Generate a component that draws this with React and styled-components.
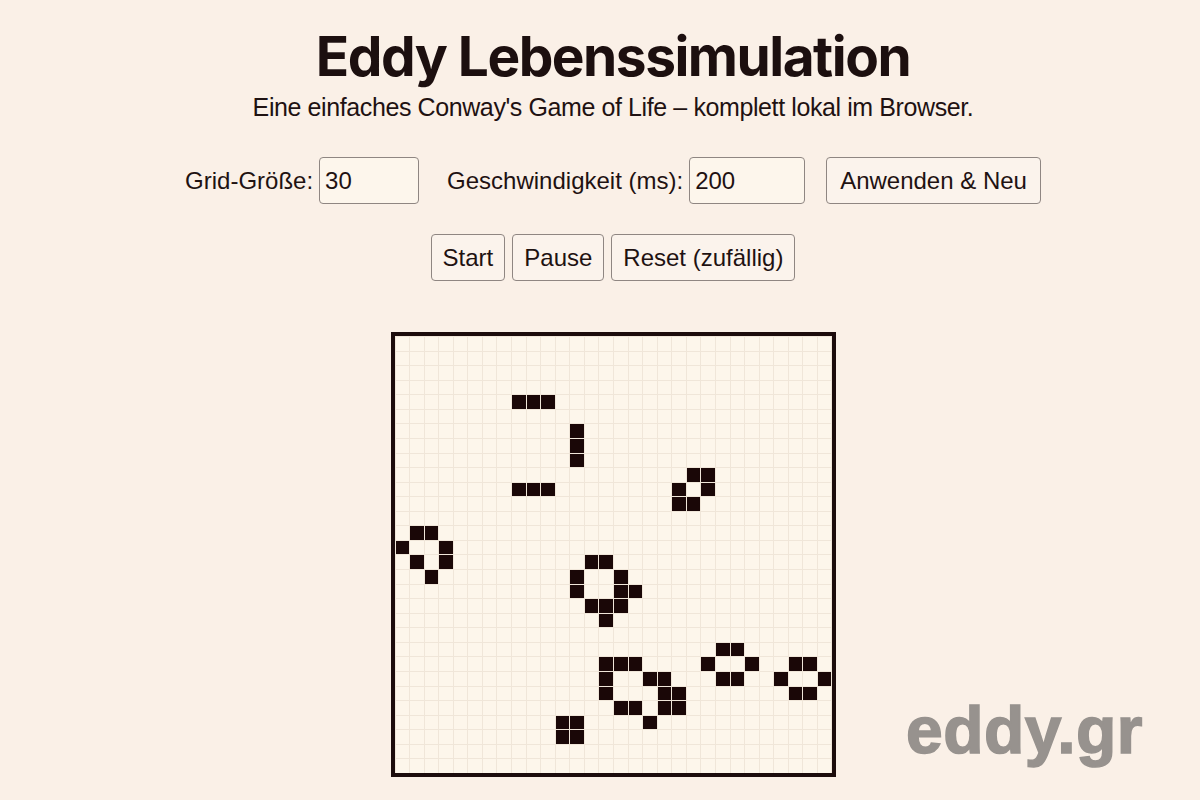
import React, { useState } from "react";
import styled, { createGlobalStyle } from "styled-components";

const SIZE = 30;

// live cells of the start pattern, row -> columns
const LIVE = {
  4: [8, 9, 10],
  6: [12],
  7: [12],
  8: [12],
  9: [20, 21],
  10: [8, 9, 10, 19, 21],
  11: [19, 20],
  13: [1, 2],
  14: [0, 3],
  15: [1, 3, 13, 14],
  16: [2, 12, 15],
  17: [12, 15, 16],
  18: [13, 14, 15],
  19: [14],
  21: [22, 23],
  22: [14, 15, 16, 21, 24, 27, 28],
  23: [14, 17, 18, 22, 23, 26, 29],
  24: [14, 18, 19, 27, 28],
  25: [15, 16, 18, 19],
  26: [11, 12, 17],
  27: [11, 12],
};

const makeGrid = () =>
  Array.from({ length: SIZE }, (_, r) =>
    Array.from({ length: SIZE }, (_, c) => (LIVE[r] || []).includes(c))
  );

const GlobalStyle = createGlobalStyle`
  html, body {
    margin: 0;
    padding: 0;
    background: #faf0e7;
  }
  body {
    font-family: "Liberation Sans", Arial, sans-serif;
    color: #1f1212;
  }
`;

const Page = styled.main`
  position: relative;
  width: 1200px;
  height: 800px;
  box-sizing: border-box;
  padding: 22px 0 0 26px;
  display: flex;
  flex-direction: column;
  align-items: center;
  overflow: hidden;
`;

const Title = styled.h1`
  margin: 0;
  font-family: Inter, "Liberation Sans", sans-serif;
  font-weight: 700;
  font-size: 55px;
  line-height: 68px;
  letter-spacing: -1.5px;
  color: #1c0f0f;
`;

const Subtitle = styled.p`
  margin: 1px 0 0;
  font-size: 25px;
  line-height: 32px;
  letter-spacing: -0.4px;
`;

const Controls = styled.div`
  display: flex;
  align-items: center;
  margin-top: ${(p) => p.$top}px;
`;

const Field = styled.label`
  display: flex;
  align-items: center;
  gap: 6px;
  font-size: 24px;
  margin-right: ${(p) => p.$gap || 0}px;
`;

const Input = styled.input`
  box-sizing: border-box;
  width: ${(p) => p.$w}px;
  height: 47px;
  padding: 0 5px;
  font-family: "Liberation Sans", Arial, sans-serif;
  font-size: 24px;
  color: #1f1212;
  background: #fdf6ec;
  border: 1.5px solid #8f8682;
  border-radius: 4px;
  outline: none;
`;

const Button = styled.button`
  box-sizing: border-box;
  height: 47px;
  padding: 0 ${(p) => p.$pad || 11}px;
  margin-right: ${(p) => p.$gap || 0}px;
  font-family: "Liberation Sans", Arial, sans-serif;
  font-size: 24px;
  color: #1f1212;
  background: #fbf3ec;
  border: 1.5px solid #8f8682;
  border-radius: 4px;
  cursor: pointer;
`;

const Board = styled.div`
  margin-top: 51px;
  width: 436px;
  height: 436px;
  border: 4px solid #1c0c0c;
  display: grid;
  grid-template-columns: repeat(${SIZE}, 1fr);
  grid-template-rows: repeat(${SIZE}, 1fr);
  gap: 1px;
  padding: 1px 0 0 1px;
  box-sizing: content-box;
  background: #f0e6d9;
`;

const Cell = styled.div`
  background: ${(p) => (p.$alive ? "#1a0707" : "#fdf6eb")};
`;

const Watermark = styled.div`
  position: absolute;
  right: 57px;
  bottom: 38px;
  font-family: "Liberation Sans", Arial, sans-serif;
  font-weight: 700;
  font-size: 66px;
  line-height: 64px;
  letter-spacing: 0.5px;
  color: #97928e;
  -webkit-text-stroke: 1.5px #97928e;
`;

export default function App() {
  const [grid] = useState(makeGrid);
  const [size, setSize] = useState("30");
  const [speed, setSpeed] = useState("200");

  return (
    <>
      <GlobalStyle />
      <Page>
        <Title>Eddy Lebenssimulation</Title>
        <Subtitle>
          Eine einfaches Conway's Game of Life – komplett lokal im Browser.
        </Subtitle>

        <Controls $top={34}>
          <Field $gap={28}>
            Grid-Größe:
            <Input $w={100} value={size} onChange={(e) => setSize(e.target.value)} />
          </Field>
          <Field $gap={21}>
            Geschwindigkeit (ms):
            <Input $w={116} value={speed} onChange={(e) => setSpeed(e.target.value)} />
          </Field>
          <Button $pad={13}>Anwenden &amp; Neu</Button>
        </Controls>

        <Controls $top={30}>
          <Button $gap={7}>Start</Button>
          <Button $gap={7}>Pause</Button>
          <Button>Reset (zufällig)</Button>
        </Controls>

        <Board>
          {grid.map((row, r) =>
            row.map((alive, c) => <Cell key={r + "-" + c} $alive={alive} />)
          )}
        </Board>

        <Watermark>eddy.gr</Watermark>
      </Page>
    </>
  );
}
